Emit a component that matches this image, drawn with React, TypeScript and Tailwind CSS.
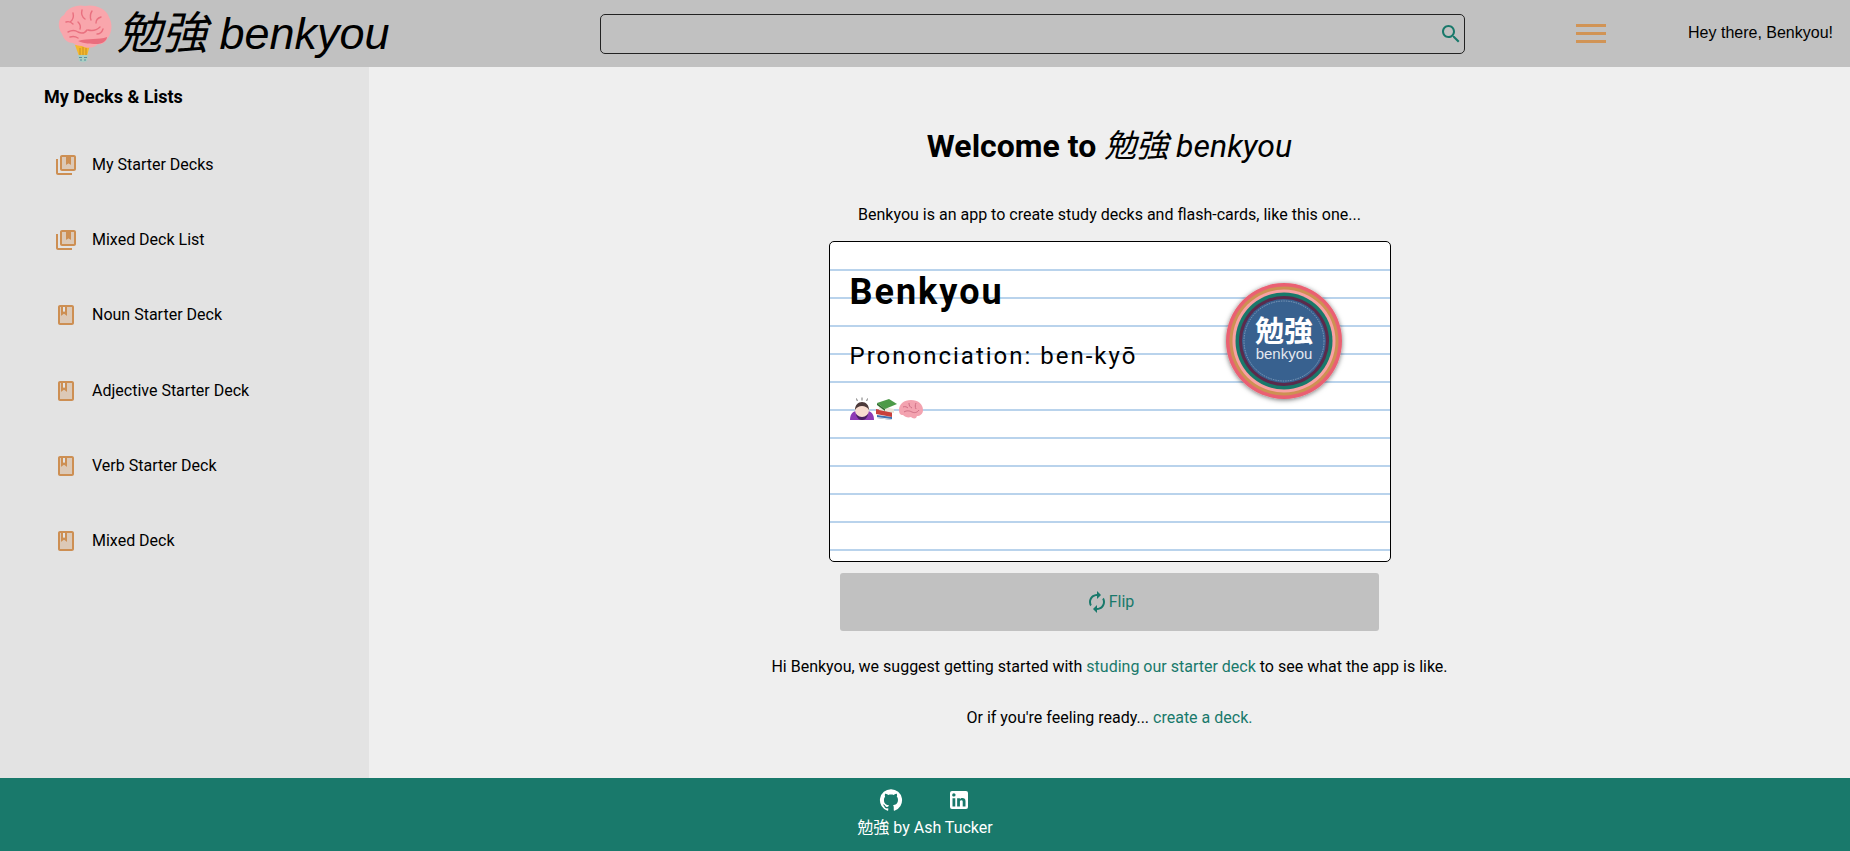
import type { ReactNode } from 'react';

const sans = 'font-["Roboto","Noto_Sans_CJK_JP",sans-serif]';

function Mui({ d, className, tone }: { d: string; className: string; tone?: string }) {
  return (
    <svg viewBox="0 0 24 24" className={className} fill="currentColor">
      {tone && <path d={tone} opacity="0.3" />}
      <path d={d} />
    </svg>
  );
}

const deckIcon = {
  d: 'M4 6H2v14c0 1.1.9 2 2 2h14v-2H4V6zm16-4H8c-1.1 0-2 .9-2 2v12c0 1.1.9 2 2 2h12c1.1 0 2-.9 2-2V4c0-1.1-.9-2-2-2zm0 14H8V4h4v8l2.5-1.5L17 12V4h3v12z',
  tone: 'M20 4h-3v8l-2.5-1.5L12 12V4H8v12h12z',
};
const bookIcon = {
  d: 'M18 2H6c-1.1 0-2 .9-2 2v16c0 1.1.9 2 2 2h12c1.1 0 2-.9 2-2V4c0-1.1-.9-2-2-2zM9 4h2v5l-1-.75L9 9V4zm9 16H6V4h1v9l3-2.25L13 13V4h5v16z',
  tone: 'M13 13l-3-2.25L7 13V4H6v16h12V4h-5z',
};

const sidebarItems = [
  { label: 'My Starter Decks', icon: deckIcon },
  { label: 'Mixed Deck List', icon: deckIcon },
  { label: 'Noun Starter Deck', icon: bookIcon },
  { label: 'Adjective Starter Deck', icon: bookIcon },
  { label: 'Verb Starter Deck', icon: bookIcon },
  { label: 'Mixed Deck', icon: bookIcon },
];

function BrainBulb() {
  return (
    <svg viewBox="0 0 54 58" className="w-[54px] h-[58px] shrink-0">
      <path d="M17 40h15l-3 11h-8z" fill="#f5b82e" />
      <path d="M20 50h10l-1 6q-4 2-8 0z" fill="#a9cfc4" />
      <path d="M21 52.5h3M26 52.5h3M22 55h2M26 55h2" stroke="#5b8ea0" strokeWidth="1.2" />
      <path d="M22 43v7M25 42v8M28 43v7" stroke="#b9861e" strokeWidth="0.8" />
      <path
        d="M4 29C-1 22 0 13 6 10 9 3 19 -1 27 1c9-2 21 2 24 11 4 7 3 17-2 22-2 4-6 6-9 5-3 4-11 5-16 2-4 0-7-1-9-3-5 0-9-3-11-9z"
        fill="#f9a6ac"
      />
      <path d="M20 36c6 3 16 3 20 3 6-1 9-4 9-7-8 3-19 1-29 4z" fill="#ea6d7d" />
      <path
        d="M8 17c3-1 5 0 7 2M15 8c1 4 0 7-3 9M24 5c-1 4 0 7 3 9M34 6c-2 3-2 6-1 9M43 12c-3 1-5 3-5 6M10 27c4-2 7-2 10 0 4 2 7 1 9-2M30 25c4 1 9 0 12-3M45 24c-1 3-3 5-6 5M20 17c2 2 3 4 2 7M12 32c3-1 5-1 8 1"
        fill="none"
        stroke="#e9707f"
        strokeWidth="1.4"
        strokeLinecap="round"
      />
    </svg>
  );
}

function BowEmoji() {
  return (
    <svg viewBox="0 0 24 24" className="w-[24px] h-[24px]">
      <path d="M0 23c0-6 3-9 7-9h10c4 0 7 3 7 9z" fill="#8e3bb5" />
      <path d="M6 17c1 5 4 6 6 6s5-1 6-6l-3-3H9z" fill="#4a2060" />
      <circle cx="12" cy="13" r="7" fill="#f8dcd0" />
      <path d="M5 13c0-5 3-8 7-8s7 3 7 8c-2-3-4-4-7-4s-5 1-7 4z" fill="#4c3a3a" />
      <path d="M6.5 1.5l.8 2.5M12 0.5v3M17.5 1.5l-.8 2.5" stroke="#777" strokeWidth="1" />
    </svg>
  );
}

function BooksEmoji() {
  return (
    <svg viewBox="0 0 24 24" className="w-[24px] h-[24px]">
      <path d="M3 18l15 2v3L3 21z" fill="#3f6fb0" />
      <path d="M3 21l15 2v-1L3 20z" fill="#e8e8e8" />
      <path d="M2 12l16 3v5L2 17z" fill="#c8403c" />
      <path d="M5 9l15 3v4L5 13z" fill="#e9e6da" />
      <path d="M3 6l12-4 8 5-12 5z" fill="#4c9a48" />
      <path d="M3 6l8 6v2L3 8z" fill="#2f6f30" />
    </svg>
  );
}

function BrainEmoji() {
  return (
    <svg viewBox="0 0 26 22" className="w-[26px] h-[22px]">
      <path d="M1 12C1 6 6 2 13 2s12 4 12 10c0 4-3 6-6 6l-1 2c-2 1-4 0-5-1-3 1-6 0-8-2-3 0-4-2-4-5z" fill="#f3a3b0" />
      <path
        d="M5 9c2-1 4 0 5 1M11 5c0 3 1 4 3 5M18 5c-1 2-1 4 0 6M6 14c3-2 6-1 8 0s5 1 7-2"
        fill="none"
        stroke="#cf6f85"
        strokeWidth="1"
      />
    </svg>
  );
}

function CardLogo() {
  return (
    <svg viewBox="0 0 130 130" className="absolute left-[389px] top-[34px] w-[130px] h-[130px]">
      <defs>
        <filter id="logoShadow" x="-20%" y="-20%" width="140%" height="140%">
          <feDropShadow dx="0" dy="1" stdDeviation="2.5" floodColor="#000" floodOpacity="0.55" />
        </filter>
      </defs>
      <circle cx="65" cy="65" r="58" fill="#ea6072" filter="url(#logoShadow)" />
      <circle cx="65" cy="65" r="54.5" fill="#cd9153" />
      <circle cx="65" cy="65" r="51.5" fill="#f9a0a2" />
      <circle cx="65" cy="65" r="48.5" fill="#19796b" />
      <circle cx="65" cy="65" r="45" fill="#5b2a4c" />
      <circle cx="65" cy="65" r="42" fill="#38618f" />
      <circle cx="65" cy="65" r="40" fill="none" stroke="#a9bdd4" strokeWidth="0.6" strokeDasharray="1.5 1" />
      <text x="65" y="66" textAnchor="middle" fill="#fff" fontSize="29" fontWeight="700" fontFamily="'Noto Sans CJK JP', sans-serif">
        勉強
      </text>
      <text x="65" y="83" textAnchor="middle" fill="#e3e8ef" fontSize="15" fontFamily="'Liberation Sans', sans-serif">
        benkyou
      </text>
    </svg>
  );
}

function TealLink({ children }: { children: ReactNode }) {
  return <a className="text-[#19796b]">{children}</a>;
}

export default function App() {
  return (
    <div className={`h-[851px] flex flex-col overflow-hidden text-black ${sans}`}>
      <header className="h-[67px] shrink-0 bg-[#c1c1c1] flex items-center">
        <div className="w-[600px] shrink-0 flex items-center pl-[58px]">
          <BrainBulb />
          <span className={'ml-[5px] text-[45px] leading-none italic whitespace-nowrap font-["Liberation_Sans","Noto_Sans_CJK_JP",sans-serif]'}>
            勉強 benkyou
          </span>
        </div>
        <div className="w-[865px] h-[40px] shrink-0 border border-[#222] rounded-[5px] flex items-center justify-end pr-[1px]">
          <Mui
            className="w-[24px] h-[24px] text-[#19796b]"
            d="M15.5 14h-.79l-.28-.27C15.41 12.59 16 11.11 16 9.5 16 5.91 13.09 3 9.5 3S3 5.91 3 9.5 5.91 16 9.5 16c1.61 0 3.09-.59 4.23-1.57l.27.28v.79l5 4.99L20.49 19l-4.99-5zm-6 0C7.01 14 5 11.99 5 9.5S7.01 5 9.5 5 14 7.01 14 9.5 11.99 14 9.5 14z"
          />
        </div>
        <div className="w-[30px] ml-[111px] shrink-0 flex flex-col gap-[5px]">
          <div className="h-[3px] bg-[#d19456]" />
          <div className="h-[3px] bg-[#d19456]" />
          <div className="h-[3px] bg-[#d19456]" />
        </div>
        <span className={'ml-auto pr-[17px] pb-[1px] text-[16px] whitespace-nowrap font-["Liberation_Sans",sans-serif]'}>
          Hey there, Benkyou!
        </span>
      </header>

      <div className="flex-1 flex min-h-0">
        <aside className="w-[369px] shrink-0 bg-[#e3e3e3] pt-[19px]">
          <h2 className="pl-[44px] text-[18px] leading-[22px] font-bold">My Decks &amp; Lists</h2>
          <ul className="mt-[19px] flex flex-col">
            {sidebarItems.map((item) => (
              <li key={item.label} className="h-[75.3px] flex items-center pl-[54px] gap-[14px] text-[16px]">
                <Mui className="w-[24px] h-[24px] text-[#cd8f53]" d={item.icon.d} tone={item.icon.tone} />
                <span>{item.label}</span>
              </li>
            ))}
          </ul>
        </aside>

        <main className="flex-1 bg-[#efefef] flex flex-col items-center pt-[60px] text-[16px]">
          <h1 className="text-[32px] leading-[38px] font-bold">
            Welcome to <em className="font-normal">勉強 benkyou</em>
          </h1>
          <p className="mt-[40px] leading-[19px]">Benkyou is an app to create study decks and flash-cards, like this one...</p>

          <div className="relative mt-[17px] w-[562px] h-[321px] border border-black rounded-[5px] overflow-hidden bg-white bg-[repeating-linear-gradient(to_bottom,transparent_0px,transparent_26px,#b9d3ec_26px,#b9d3ec_28px)] bg-[position:0_1px] pl-[20px]">
            <div className="mt-[29px] text-[36px] leading-[42px] font-bold tracking-[2px]">Benkyou</div>
            <div className="mt-[29px] text-[24px] leading-[28px] tracking-[2px]">Prononciation: ben-kyō</div>
            <div className="mt-[27px] flex items-center">
              <BowEmoji />
              <BooksEmoji />
              <BrainEmoji />
            </div>
            <CardLogo />
          </div>

          <button className="mt-[11px] w-[539px] h-[58px] rounded-[3px] bg-[#c1c1c1] text-[#19796b] flex items-center justify-center">
            <Mui
              className="w-[24px] h-[24px]"
              d="M12 6v3l4-4-4-4v3c-4.42 0-8 3.58-8 8 0 1.57.46 3.03 1.24 4.26L6.7 14.8c-.45-.83-.7-1.79-.7-2.8 0-3.31 2.69-6 6-6zm6.76 1.74L17.3 9.2c.44.84.7 1.79.7 2.8 0 3.31-2.69 6-6 6v-3l-4 4 4 4v-3c4.42 0 8-3.58 8-8 0-1.57-.46-3.03-1.24-4.26z"
            />
            <span>Flip</span>
          </button>

          <p className="mt-[26px] leading-[19px]">
            Hi Benkyou, we suggest getting started with <TealLink>studing our starter deck</TealLink> to see what the app is like.
          </p>
          <p className="mt-[32px] leading-[19px]">
            Or if you're feeling ready... <TealLink>create a deck.</TealLink>
          </p>
        </main>
      </div>

      <footer className="h-[73px] shrink-0 bg-[#19796b] text-white flex flex-col items-center pt-[10px]">
        <div className="flex gap-[44px]">
          <Mui
            className="w-[24px] h-[24px]"
            d="M12 1.27a11 11 0 00-3.48 21.46c.55.09.73-.28.73-.55v-1.84c-3.03.64-3.67-1.46-3.67-1.46-.55-1.29-1.28-1.65-1.28-1.65-.92-.65.1-.65.1-.65 1.1 0 1.73 1.1 1.73 1.1.92 1.65 2.57 1.2 3.21.92a2 2 0 01.64-1.47c-2.47-.27-5.04-1.19-5.04-5.5 0-1.1.46-2.1 1.2-2.84a3.76 3.76 0 010-2.93s.91-.28 3.11 1.1c1.8-.49 3.7-.49 5.5 0 2.1-1.38 3.02-1.1 3.02-1.1a3.76 3.76 0 010 2.93c.83.74 1.2 1.74 1.2 2.94 0 4.21-2.57 5.13-5.04 5.4.45.37.82.92.82 2.02v3.03c0 .27.1.64.73.55A11 11 0 0012 1.27"
          />
          <Mui
            className="w-[24px] h-[24px]"
            d="M19 3a2 2 0 0 1 2 2v14a2 2 0 0 1-2 2H5a2 2 0 0 1-2-2V5a2 2 0 0 1 2-2h14m-.5 15.5v-5.3a3.26 3.26 0 0 0-3.26-3.26c-.85 0-1.84.52-2.32 1.3v-1.11h-2.79v8.37h2.79v-4.93c0-.77.62-1.4 1.39-1.4a1.4 1.4 0 0 1 1.4 1.4v4.93h2.79M6.88 8.56a1.68 1.68 0 0 0 1.68-1.68c0-.93-.75-1.69-1.68-1.69a1.69 1.69 0 0 0-1.69 1.69c0 .93.76 1.68 1.69 1.68m1.39 9.94v-8.37H5.5v8.37h2.77z"
          />
        </div>
        <div className="mt-[6px] text-[16px] leading-[19px]">勉強 by Ash Tucker</div>
      </footer>
    </div>
  );
}
